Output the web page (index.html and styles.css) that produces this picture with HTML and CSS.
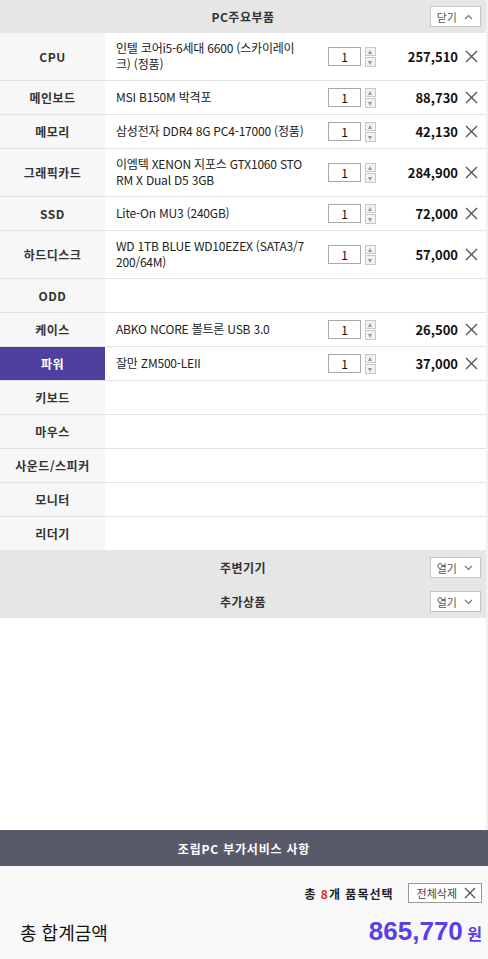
FILE: index.html
```html
<!DOCTYPE html>
<html lang="ko">
<head>
  <meta charset="utf-8">
  <meta name="viewport" content="width=device-width, initial-scale=1">
  <title>PC주요부품</title>
  <link rel="stylesheet" href="styles.css">
</head>
<body>
  <div class="page">
    <div class="main">
      <div class="section-head">
        <span class="section-title">PC주요부품</span>
        <button class="toggle">닫기 <svg width="9" height="6" viewBox="0 0 9 6"><path d="M1 5L4.5 1.5L8 5" fill="none" stroke="#777" stroke-width="1.2"/></svg></button>
      </div>

      <div class="parts">
        <div class="row">
          <div class="label">CPU</div>
          <div class="name">인텔 코어i5-6세대 6600 (스카이레이크) (정품)</div>
          <div class="qty"><span class="qty-box">1</span><span class="spin"><i class="up"></i><i class="down"></i></span></div>
          <div class="price">257,510</div>
          <div class="del"><svg width="13" height="13" viewBox="0 0 13 13"><path d="M1 1L12 12M12 1L1 12" stroke="#555" stroke-width="1.4"/></svg></div>
        </div>
        <div class="row">
          <div class="label">메인보드</div>
          <div class="name">MSI B150M 박격포</div>
          <div class="qty"><span class="qty-box">1</span><span class="spin"><i class="up"></i><i class="down"></i></span></div>
          <div class="price">88,730</div>
          <div class="del"><svg width="13" height="13" viewBox="0 0 13 13"><path d="M1 1L12 12M12 1L1 12" stroke="#555" stroke-width="1.4"/></svg></div>
        </div>
        <div class="row">
          <div class="label">메모리</div>
          <div class="name">삼성전자 DDR4 8G PC4-17000 (정품)</div>
          <div class="qty"><span class="qty-box">1</span><span class="spin"><i class="up"></i><i class="down"></i></span></div>
          <div class="price">42,130</div>
          <div class="del"><svg width="13" height="13" viewBox="0 0 13 13"><path d="M1 1L12 12M12 1L1 12" stroke="#555" stroke-width="1.4"/></svg></div>
        </div>
        <div class="row">
          <div class="label">그래픽카드</div>
          <div class="name">이엠텍 XENON 지포스 GTX1060 STORM X Dual D5 3GB</div>
          <div class="qty"><span class="qty-box">1</span><span class="spin"><i class="up"></i><i class="down"></i></span></div>
          <div class="price">284,900</div>
          <div class="del"><svg width="13" height="13" viewBox="0 0 13 13"><path d="M1 1L12 12M12 1L1 12" stroke="#555" stroke-width="1.4"/></svg></div>
        </div>
        <div class="row">
          <div class="label">SSD</div>
          <div class="name">Lite-On MU3 (240GB)</div>
          <div class="qty"><span class="qty-box">1</span><span class="spin"><i class="up"></i><i class="down"></i></span></div>
          <div class="price">72,000</div>
          <div class="del"><svg width="13" height="13" viewBox="0 0 13 13"><path d="M1 1L12 12M12 1L1 12" stroke="#555" stroke-width="1.4"/></svg></div>
        </div>
        <div class="row">
          <div class="label">하드디스크</div>
          <div class="name">WD 1TB BLUE WD10EZEX (SATA3/7200/64M)</div>
          <div class="qty"><span class="qty-box">1</span><span class="spin"><i class="up"></i><i class="down"></i></span></div>
          <div class="price">57,000</div>
          <div class="del"><svg width="13" height="13" viewBox="0 0 13 13"><path d="M1 1L12 12M12 1L1 12" stroke="#555" stroke-width="1.4"/></svg></div>
        </div>
        <div class="row empty"><div class="label">ODD</div></div>
        <div class="row">
          <div class="label">케이스</div>
          <div class="name">ABKO NCORE 볼트론 USB 3.0</div>
          <div class="qty"><span class="qty-box">1</span><span class="spin"><i class="up"></i><i class="down"></i></span></div>
          <div class="price">26,500</div>
          <div class="del"><svg width="13" height="13" viewBox="0 0 13 13"><path d="M1 1L12 12M12 1L1 12" stroke="#555" stroke-width="1.4"/></svg></div>
        </div>
        <div class="row">
          <div class="label active">파워</div>
          <div class="name">잘만 ZM500-LEII</div>
          <div class="qty"><span class="qty-box">1</span><span class="spin"><i class="up"></i><i class="down"></i></span></div>
          <div class="price">37,000</div>
          <div class="del"><svg width="13" height="13" viewBox="0 0 13 13"><path d="M1 1L12 12M12 1L1 12" stroke="#555" stroke-width="1.4"/></svg></div>
        </div>
        <div class="row empty"><div class="label">키보드</div></div>
        <div class="row empty"><div class="label">마우스</div></div>
        <div class="row empty"><div class="label">사운드/스피커</div></div>
        <div class="row empty"><div class="label">모니터</div></div>
        <div class="row empty"><div class="label">리더기</div></div>
      </div>

      <div class="section-head fold">
        <span class="section-title">주변기기</span>
        <button class="toggle">열기 <svg width="9" height="6" viewBox="0 0 9 6"><path d="M1 1L4.5 4.5L8 1" fill="none" stroke="#777" stroke-width="1.2"/></svg></button>
      </div>
      <div class="section-head fold">
        <span class="section-title">추가상품</span>
        <button class="toggle">열기 <svg width="9" height="6" viewBox="0 0 9 6"><path d="M1 1L4.5 4.5L8 1" fill="none" stroke="#777" stroke-width="1.2"/></svg></button>
      </div>
      <div class="spacer"></div>
    </div>

    <div class="service">조립PC 부가서비스 사항</div>
    <div class="summary">
      <div class="count-line">
        <span class="count">총 <em>8</em>개 품목선택</span>
        <button class="clear">전체삭제 <svg width="12" height="12" viewBox="0 0 12 12"><path d="M1 1L11 11M11 1L1 11" stroke="#555" stroke-width="1.4"/></svg></button>
      </div>
      <div class="total-line">
        <span class="total-label">총 합계금액</span>
        <span class="total"><b>865,770</b> 원</span>
      </div>
    </div>
  </div>
</body>
</html>
```

FILE: styles.css
```css
:root {
  --head-bg: #e6e6e6;
  --label-bg: #f7f7f7;
  --line: #e2e2e2;
  --text: #222;
  --purple: #4f3f9f;
  --accent: #5a3fe8;
}
*, *::before, *::after {
  box-sizing: border-box;
  margin: 0;
  padding: 0;
}
html, body {
  width: 100%;
  height: 100%;
  background: #f1f1f1;
}
body {
  font-family: "Noto Sans CJK KR", "Noto Sans", sans-serif;
  font-size: 12px;
  color: var(--text);
}
.page {
  display: flex;
  flex-direction: column;
  height: 959px;
}
.main {
  width: 486px;
  background: #fff;
  flex: 1;
  display: flex;
  flex-direction: column;
}
.section-head {
  height: 33px;
  background: var(--head-bg);
  display: flex;
  align-items: center;
  justify-content: center;
  position: relative;
}
.section-head.fold {
  height: 34px;
}
.section-title {
  font-weight: 700;
  font-size: 12px;
  color: #333;
  letter-spacing: 0.5px;
}
.toggle {
  position: absolute;
  right: 5px;
  top: 6px;
  height: 21px;
  padding: 0 7px 0 6px;
  background: #fff;
  border: 1px solid #c4c4c4;
  font: inherit;
  font-size: 11px;
  color: #555;
  display: flex;
  align-items: center;
  gap: 7px;
}
.fold .toggle {
  top: 7px;
}
.row {
  display: flex;
  min-height: 34px;
  border-top: 1px solid var(--line);
}
.row:first-child {
  border-top: 0;
}
.label {
  width: 105px;
  flex: none;
  background: var(--label-bg);
  display: flex;
  align-items: center;
  justify-content: center;
  font-weight: 700;
  letter-spacing: 0.5px;
  color: #333;
}
.label.active {
  background: var(--purple);
  color: #fff;
}
.name {
  width: 212px;
  flex: none;
  padding: 7px 12px 8px 11px;
  line-height: 16px;
  display: flex;
  align-items: center;
  color: #222;
  letter-spacing: -0.2px;
  word-break: break-all;
}
.qty {
  width: 60px;
  flex: none;
  display: flex;
  align-items: center;
  padding-left: 11px;
  gap: 4px;
}
.qty-box {
  width: 33px;
  height: 19px;
  border: 1px solid #aaa;
  text-align: center;
  line-height: 18px;
  font-size: 12px;
  color: #111;
}
.spin {
  width: 11px;
  height: 20px;
  display: flex;
  flex-direction: column;
  gap: 1px;
}
.spin i {
  flex: 1;
  border: 1px solid #c8c8c8;
  background: #f2f2f2;
  position: relative;
}
.spin i::after {
  content: "";
  position: absolute;
  left: 2px;
  top: 2px;
  border-left: 2.5px solid transparent;
  border-right: 2.5px solid transparent;
}
.spin .up::after {
  border-bottom: 4px solid #999;
}
.spin .down::after {
  top: 3px;
  border-top: 4px solid #999;
}
.price {
  flex: 1;
  display: flex;
  align-items: center;
  justify-content: flex-end;
  font-weight: 700;
  font-size: 13px;
  color: #111;
}
.del {
  width: 28px;
  flex: none;
  display: flex;
  align-items: center;
  justify-content: center;
  padding-right: 2px;
}
.spacer {
  flex: 1;
}
.service {
  height: 36px;
  background: #585a69;
  color: #fff;
  font-weight: 700;
  display: flex;
  align-items: center;
  justify-content: center;
  letter-spacing: 0.8px;
}
.summary {
  height: 93px;
  background: #f8f8f8;
  padding: 17px 6px 0 20px;
}
.count-line {
  display: flex;
  justify-content: flex-end;
  align-items: center;
  gap: 14px;
}
.count {
  font-weight: 700;
  letter-spacing: 1px;
  color: #222;
}
.count em {
  font-style: normal;
  color: #e02a2a;
}
.clear {
  height: 20px;
  padding: 0 5px 0 8px;
  background: #fff;
  border: 1px solid #999;
  font: inherit;
  font-size: 11px;
  color: #444;
  display: flex;
  align-items: center;
  gap: 7px;
}
.total-line {
  display: flex;
  justify-content: space-between;
  align-items: center;
  margin-top: 13px;
}
.total-label {
  font-size: 18px;
  color: #111;
}
.total {
  color: var(--accent);
  font-size: 16px;
  font-weight: 700;
}
.total b {
  font-family: "Liberation Sans", Arial, sans-serif;
  font-size: 26px;
}
```
